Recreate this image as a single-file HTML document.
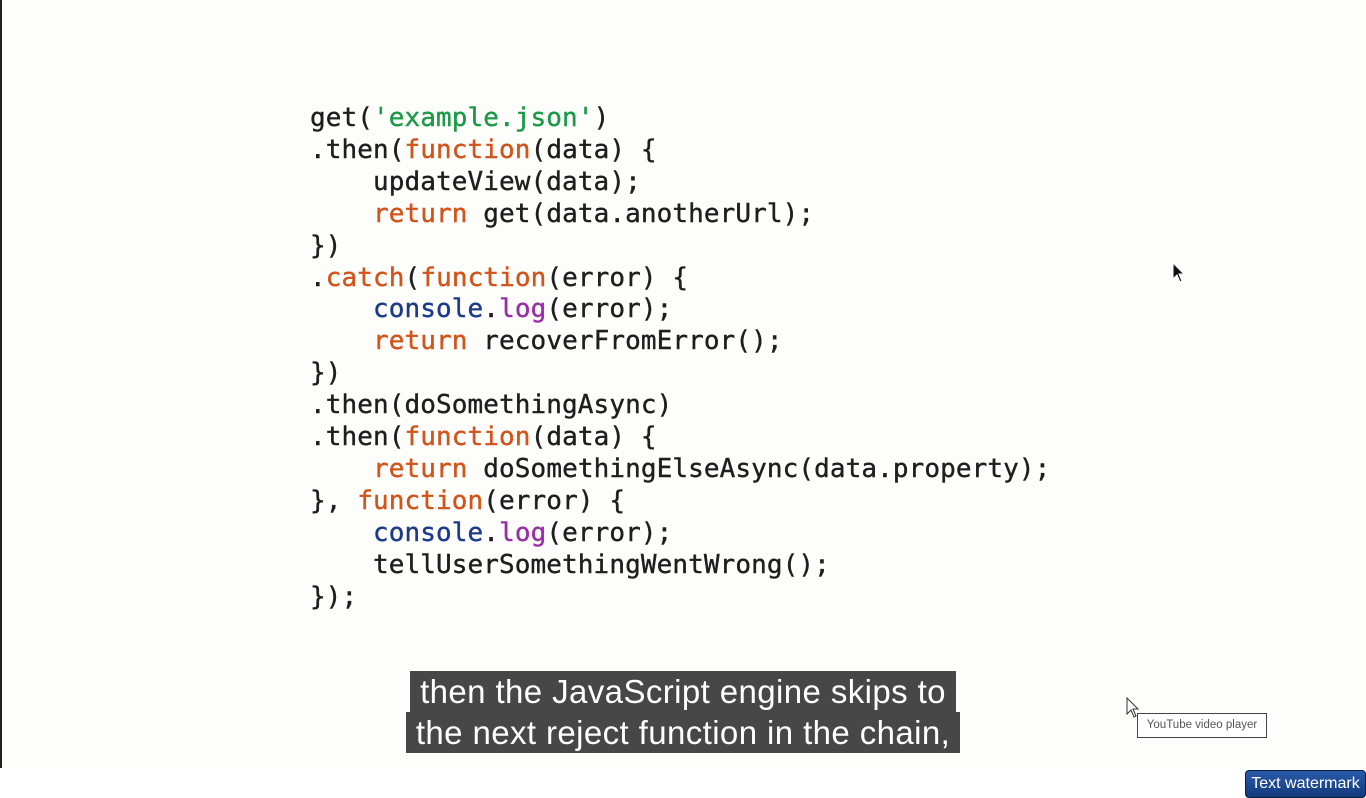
<!DOCTYPE html>
<html><head><meta charset="utf-8"><style>
body{margin:0;width:1366px;height:798px;background:#fff;position:relative;overflow:hidden}
#v{position:absolute;left:0;top:0;width:1366px;height:768px;background:#fdfdfc;border-left:2px solid #222;box-sizing:border-box}
pre{position:absolute;left:310px;top:103px;margin:0;font-family:"DejaVu Sans Mono",monospace;font-size:26px;line-height:31.9px;color:#1e1e1e;-webkit-text-stroke:0.4px currentColor;letter-spacing:0.1px}
.o{color:#d2541a}.g{color:#1c9a48}.b{color:#1d3a8a}.p{color:#9a2ea8}
.s{position:absolute;background:#474747;color:#fff;font-family:"Liberation Sans",sans-serif;font-size:33px;letter-spacing:0.4px;text-align:center;white-space:nowrap;line-height:41px;overflow:hidden}
.tip{position:absolute;left:1137px;top:713px;width:130px;height:25px;border:1px solid #444;background:#fff;font-family:"Liberation Sans",sans-serif;font-size:11.5px;color:#555;line-height:23px;text-align:center;box-sizing:border-box}
.wm{position:absolute;left:1245px;top:770px;width:121px;height:28px;border-radius:4px;background:linear-gradient(#2a5aa8,#123a7c);border:1px solid #0a1d44;box-sizing:border-box;color:#fff;font-family:"Liberation Sans",sans-serif;font-size:16px;line-height:26px;text-align:center}
</style></head><body>
<div id="v"></div>
<pre>get(<span class="g">'example.json'</span>)
.then(<span class="o">function</span>(data) {
    updateView(data);
    <span class="o">return</span> get(data.anotherUrl);
})
.<span class="o">catch</span>(<span class="o">function</span>(error) {
    <span class="b">console</span>.<span class="p">log</span>(error);
    <span class="o">return</span> recoverFromError();
})
.then(doSomethingAsync)
.then(<span class="o">function</span>(data) {
    <span class="o">return</span> doSomethingElseAsync(data.property);
}, <span class="o">function</span>(error) {
    <span class="b">console</span>.<span class="p">log</span>(error);
    tellUserSomethingWentWrong();
});</pre>
<svg style="position:absolute;left:1172px;top:262px" width="14" height="22" viewBox="0 0 14 22"><path d="M1 1 L1 17 L5 13 L8 20 L10 19 L7 12 L12 12 Z" fill="#111" stroke="#fff" stroke-width="1"/></svg>
<div class="s" style="left:410px;top:671px;width:546px">then the JavaScript engine skips to</div>
<div class="s" style="left:406px;top:712px;width:554px">the next reject function in the chain,</div>
<svg style="position:absolute;left:1126px;top:697px" width="14" height="22" viewBox="0 0 14 22"><path d="M1 1 L1 17 L5 13 L8 20 L10 19 L7 12 L12 12 Z" fill="#fff" stroke="#333" stroke-width="1"/></svg>
<div class="tip">YouTube video player</div>
<div class="wm">Text watermark</div>
</body></html>
